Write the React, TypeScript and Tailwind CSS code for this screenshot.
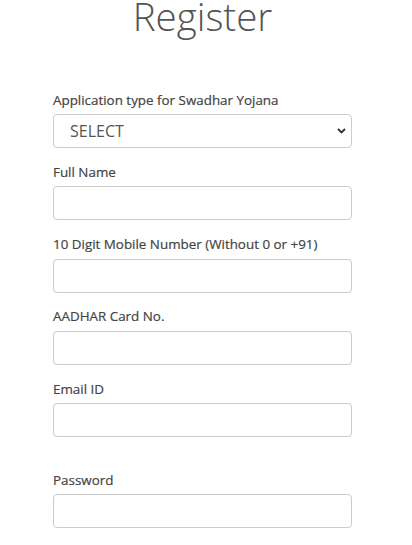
const FIELDS = [
  { label: "Full Name", type: "text" },
  { label: "10 Digit Mobile Number (Without 0 or +91)", type: "text" },
  { label: "AADHAR Card No.", type: "text" },
  { label: "Email ID", type: "email" },
];

const inputCls =
  "block h-[34px] w-full rounded-[4px] border border-[#cccccc] bg-white px-3 text-[14px] text-[#555] outline-none";

const labelCls = "mb-[4.5px] block text-[13.4px] font-normal leading-[20px] text-[#444] [-webkit-text-stroke:0.2px_#444]";

export default function App() {
  return (
    <div
      className="min-h-[545px] w-[412px] overflow-hidden bg-white"
      style={{ fontFamily: '"Open Sans", "Liberation Sans", sans-serif' }}
    >
      <div className="ml-[53px] w-[299px]">
        <h1 className="text-center text-[38.5px] font-light leading-[33.5px] text-[#555]">Register</h1>

        <div className="mt-[56px] flex flex-col gap-[13.75px]">
          {/* Application type */}
          <div>
            <label className={labelCls}>Application type for Swadhar Yojana</label>
            <div className="relative">
              <select className="block h-[34px] w-full appearance-none rounded-[4px] border border-[#cccccc] bg-white pl-[16px] text-[16px] text-[#555] outline-none">
                <option>SELECT</option>
              </select>
              <svg
                className="pointer-events-none absolute right-[6px] top-[14px] h-[6px] w-[9px]"
                viewBox="0 0 9 6"
                fill="none"
                stroke="#333"
                strokeWidth="1.8"
              >
                <path d="M1 1l3.5 3.5L8 1" />
              </svg>
            </div>
          </div>

          {FIELDS.map((f) => (
            <div key={f.label}>
              <label className={labelCls}>{f.label}</label>
              <input type={f.type} className={inputCls} />
            </div>
          ))}

          <div className="mt-[18.75px]">
            <label className={labelCls}>Password</label>
            <input type="password" className={inputCls} />
          </div>
        </div>
      </div>
    </div>
  );
}
